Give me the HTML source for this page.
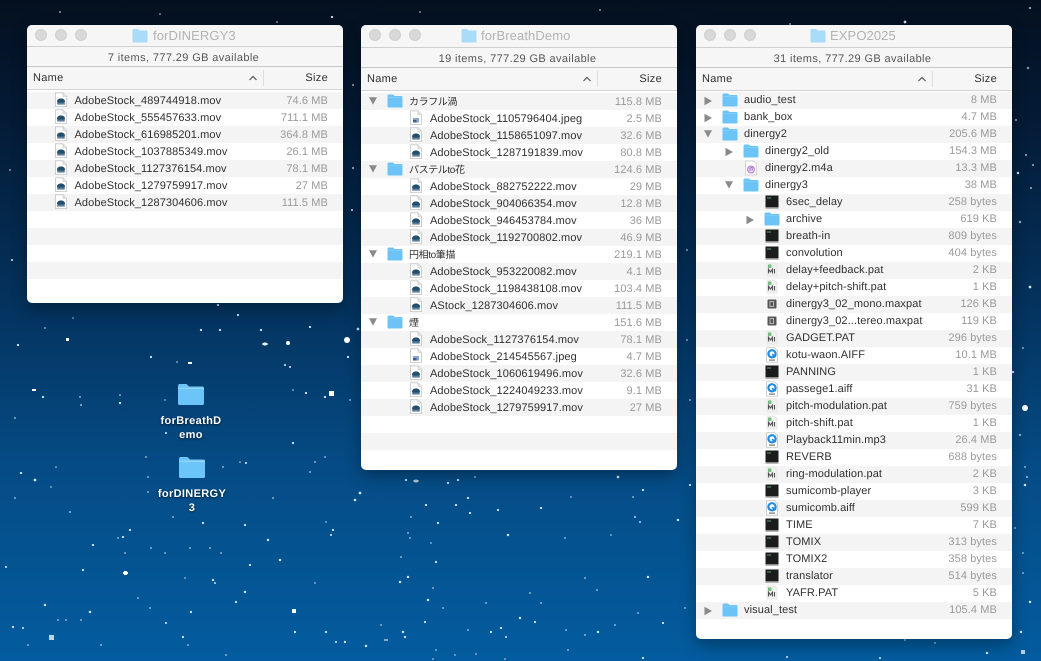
<!DOCTYPE html>
<html><head><meta charset="utf-8"><style>
html,body{margin:0;padding:0}
body{width:1041px;height:661px;overflow:hidden;position:relative;background:linear-gradient(#04101f 0,#041c38 130px,#04325d 300px,#054c86 470px,#035c9f 661px);font-family:"Liberation Sans","Noto Sans CJK JP",sans-serif;text-rendering:geometricPrecision}
#st{position:absolute;left:0;top:0;filter:blur(.35px)}
.w{position:absolute;top:25px;width:316px;background:#fff;border-radius:5px;overflow:hidden;box-shadow:0 6px 16px rgba(0,0,0,.33)}
.t{height:21px;background:#f6f6f6;border-bottom:1px solid #d0d0d0;position:relative}
.t u{position:absolute;top:4px;width:12px;height:12px;border-radius:50%;background:#d8d8d8;border:.5px solid #d0d0d0;box-sizing:border-box}
.t svg{position:absolute;top:3px}
.t span{position:absolute;top:3px;font-size:13px;line-height:16px;color:#b2b2b2;letter-spacing:.1px}
.f{height:19px;background:#f6f6f6;border-bottom:1px solid #c8c8c8;text-align:center;padding-right:3px;font-size:11px;line-height:22px;color:#555;letter-spacing:.38px}
.h{height:22px;background:#f6f6f6;border-bottom:1px solid #d4d4d4;position:relative;font-size:11px;line-height:22px;color:#2e2e2e;letter-spacing:.3px}
.h b{font-weight:normal;position:absolute;left:6px;top:0}
.h em{font-style:normal;position:absolute;right:15px;top:0}
.h s{position:absolute;left:236px;top:3px;width:1px;height:16px;background:#dedede}
.h svg{position:absolute;left:221px;top:8px}
.rows{margin-top:2px}
.r{height:17px;position:relative;font-size:11px;line-height:17px;color:#2f2f2f;letter-spacing:.1px;white-space:nowrap}
.r:nth-child(odd){background:#f4f4f4}
.up .r{line-height:19px}
.r svg{position:absolute;top:0}
.r svg.ic{width:16px;height:16px}
.r svg.tr{width:10px;height:10px;top:4px}
.r b{font-weight:normal;position:absolute;top:0}
.r i{font-style:normal;position:absolute;right:15px;top:0;color:#9a9a9a}
.d0 .ic{left:26px}.d1 .ic{left:47px}.d2 .ic{left:68px}
.d0 b{left:48px}.d1 b{left:69px}.d2 b{left:90px}
.d0 .tr{left:7px}.d1 .tr{left:28px}.d2 .tr{left:49px}
.j{font-size:10px;letter-spacing:-.4px}
.g{position:absolute;color:#fff;font-size:11px;font-weight:bold;line-height:14px;text-align:center;text-shadow:0 1px 2px rgba(0,0,0,.7);letter-spacing:.35px;width:90px}
</style></head><body>
<svg width="0" height="0" style="position:absolute"><defs>
<symbol id="fo" viewBox="0 0 16 16"><path d="M0.5 3.2Q.5 1.5 2 1.5H6L7.5 3H14.5Q15.5 3 15.5 4.2V13.6Q15.5 14.5 14.5 14.5H1.5Q.5 14.5 .5 13.6Z" fill="#6cc4f6"/><path d="M.5 4.5H15.5V5H.5Z" fill="#94d5fa"/></symbol>
<symbol id="mo" viewBox="0 0 16 16"><path d="M2.5 .8H10L13.5 4.3V14.6H2.5Z" fill="#fff" stroke="#c4c4c4" stroke-width=".8"/><path d="M10 .8V4.3H13.5" fill="#e6e6e6" stroke="#c4c4c4" stroke-width=".7"/><ellipse cx="8" cy="9.3" rx="4" ry="2.9" fill="#23506f"/><rect x="4.2" y="10.6" width="7.6" height="2" fill="#5d7f9c"/></symbol>
<symbol id="jp" viewBox="0 0 16 16"><path d="M2.5 .8H10L13.5 4.3V14.6H2.5Z" fill="#fff" stroke="#c4c4c4" stroke-width=".8"/><path d="M10 .8V4.3H13.5" fill="#e6e6e6" stroke="#c4c4c4" stroke-width=".7"/><rect x="5" y="8" width="6" height="4.5" fill="#8aa5cc"/><rect x="5" y="10" width="3.5" height="2.5" fill="#3f5f96"/></symbol>
<symbol id="te" viewBox="0 0 16 16"><rect x="1.5" y="1.5" width="13" height="12" fill="#1b1d1c"/><rect x="1.5" y="13" width="13" height="1.6" fill="#8a8a8a"/><rect x="3" y="3.5" width="4" height="1" fill="#5f9a68"/></symbol>
<symbol id="pa" viewBox="0 0 16 16"><path d="M3 1H10.5L13 3.5V14H3Z" fill="#f1f1f1" stroke="#e2e2e2" stroke-width=".7"/><rect x="4" y="2.5" width="3.4" height="3.4" fill="#6fbf7c"/><path d="M4.5 11.5V7.2L6.5 10L8.5 7.2V11.5M10.5 7V11.5" fill="none" stroke="#555" stroke-width="1.1"/></symbol>
<symbol id="mx" viewBox="0 0 16 16"><rect x="3.5" y="3.5" width="9" height="9" rx="1" fill="#565656"/><path d="M6 5.5H9.5V10.5H6Z" fill="none" stroke="#b8b8b8" stroke-width="1"/></symbol>
<symbol id="ai" viewBox="0 0 16 16"><path d="M2.5 .8H10.5L13.5 3.8V15.2H2.5Z" fill="#fff" stroke="#b8b8b8" stroke-width=".7"/><circle cx="8" cy="6.8" r="3.6" fill="none" stroke="#1e8ce6" stroke-width="2.2"/><path d="M8 7.3L12 9.8" stroke="#1e8ce6" stroke-width="1.6"/><rect x="5" y="12.5" width="6" height="1.2" fill="#777"/></symbol>
<symbol id="m4" viewBox="0 0 16 16"><path d="M2.5 1H10.5L13.5 4V15H2.5Z" fill="#fff" stroke="#c6c6c6" stroke-width=".7"/><circle cx="8" cy="9.5" r="3.5" fill="#e9d3ef" stroke="#b77fd0" stroke-width="1"/><path d="M7 11V8L9.2 7.5V10.5" fill="none" stroke="#8a5fc2" stroke-width=".8"/></symbol>
<symbol id="tr" viewBox="0 0 10 10"><path d="M1.5 .8L9 5L1.5 9.2Z" fill="#8a8a8a"/></symbol>
<symbol id="td" viewBox="0 0 10 10"><path d="M1 .3H9L5 7.6Z" fill="#8a8a8a"/></symbol>
<symbol id="bf" viewBox="0 0 26 21"><path d="M0 2Q0 0 2 0H8.5L11 2.5H24.5Q26 2.5 26 4.5V19.5Q26 21 24.5 21H1.5Q0 21 0 19.5Z" fill="#6cc5f8"/><path d="M0 3.8H26V5H0Z" fill="#93d6fb"/></symbol>
</defs></svg>

<svg id="st" width="1041" height="661" fill="#cfe6f8">
<g stroke="#cfe6f8" stroke-width=".7">
<circle cx="18" cy="345" r=".8"/><circle cx="45" cy="328" r=".6" opacity=".6"/><circle cx="73" cy="318" r=".6" opacity=".5"/><circle cx="238" cy="315" r=".8"/><circle cx="218" cy="305" r=".8"/><circle cx="201" cy="330" r=".8"/><circle cx="220" cy="330" r=".8"/><circle cx="261" cy="330" r=".8"/><circle cx="310" cy="327" r=".8"/><circle cx="358" cy="329" r="1"/><circle cx="348" cy="357" r=".8"/><circle cx="151" cy="357" r=".8"/><circle cx="177" cy="362" r=".6" opacity=".6"/><circle cx="285" cy="365" r=".7"/><circle cx="290" cy="367" r=".7"/><circle cx="43" cy="397" r=".8"/><circle cx="80" cy="397" r=".7" opacity=".6"/><circle cx="81" cy="405" r=".7" opacity=".7"/><circle cx="120" cy="395" r=".7" opacity=".6"/><circle cx="120" cy="403" r=".8"/><circle cx="165" cy="400" r=".7" opacity=".5"/><circle cx="306" cy="393" r=".8"/><circle cx="325" cy="397" r=".8"/><circle cx="293" cy="390" r=".6" opacity=".6"/><circle cx="15" cy="418" r=".7" opacity=".6"/><circle cx="166" cy="433" r=".7"/><circle cx="293" cy="443" r=".8"/><circle cx="146" cy="457" r=".7" opacity=".6"/><circle cx="325" cy="457" r=".7" opacity=".6"/><circle cx="246" cy="463" r=".7"/><circle cx="240" cy="462" r=".6" opacity=".6"/><circle cx="315" cy="462" r=".7" opacity=".6"/><circle cx="310" cy="472" r=".7" opacity=".6"/><circle cx="223" cy="467" r=".7" opacity=".6"/><circle cx="56" cy="467" r=".6" opacity=".6"/><circle cx="21" cy="473" r=".8"/><circle cx="35" cy="480" r="1"/><circle cx="51" cy="487" r=".6" opacity=".6"/><circle cx="148" cy="477" r=".7" opacity=".6"/><circle cx="148" cy="492" r=".7" opacity=".6"/><circle cx="15" cy="498" r=".7" opacity=".6"/><circle cx="273" cy="498" r=".7" opacity=".6"/><circle cx="355" cy="500" r=".8"/><circle cx="70" cy="512" r=".7" opacity=".7"/><circle cx="173" cy="517" r=".7" opacity=".6"/><circle cx="203" cy="523" r=".8"/><circle cx="245" cy="525" r=".8"/><circle cx="326" cy="522" r=".6" opacity=".6"/><circle cx="333" cy="530" r=".8"/><circle cx="331" cy="535" r=".7"/><circle cx="130" cy="530" r=".8"/><circle cx="123" cy="537" r=".8"/><circle cx="118" cy="538" r=".7" opacity=".6"/><circle cx="93" cy="545" r=".8"/><circle cx="268" cy="540" r=".9"/><circle cx="125" cy="553" r=".7" opacity=".6"/><circle cx="151" cy="548" r=".7" opacity=".6"/><circle cx="165" cy="553" r=".7" opacity=".6"/><circle cx="190" cy="548" r=".7" opacity=".6"/><circle cx="210" cy="548" r=".7" opacity=".6"/><circle cx="221" cy="553" r=".7" opacity=".6"/><circle cx="6" cy="567" r=".7"/><circle cx="250" cy="565" r=".8"/><circle cx="280" cy="560" r=".9"/><circle cx="83" cy="570" r=".8"/><circle cx="213" cy="580" r=".8"/><circle cx="215" cy="583" r=".6"/><circle cx="185" cy="578" r=".6" opacity=".6"/><circle cx="245" cy="592" r=".9"/><circle cx="315" cy="583" r=".6" opacity=".6"/><circle cx="236" cy="602" r=".8"/><circle cx="138" cy="598" r=".7" opacity=".6"/><circle cx="45" cy="605" r=".9"/><circle cx="90" cy="612" r=".9"/><circle cx="191" cy="612" r=".8"/><circle cx="150" cy="608" r=".7" opacity=".6"/><circle cx="58" cy="620" r=".7" opacity=".6"/><circle cx="66" cy="620" r=".7" opacity=".6"/><circle cx="81" cy="620" r=".7" opacity=".6"/><circle cx="166" cy="623" r=".7"/><circle cx="13" cy="627" r=".8"/><circle cx="23" cy="628" r=".7"/><circle cx="295" cy="632" r=".8"/><circle cx="326" cy="632" r=".8"/><circle cx="183" cy="637" r=".8"/><circle cx="336" cy="642" r=".7"/><circle cx="345" cy="642" r=".8"/><circle cx="28" cy="645" r=".7" opacity=".6"/><circle cx="101" cy="645" r=".7" opacity=".6"/><circle cx="188" cy="645" r=".7" opacity=".6"/><circle cx="226" cy="655" r=".7" opacity=".6"/>
<circle cx="406" cy="480" r=".8"/><circle cx="448" cy="483" r=".8"/><circle cx="458" cy="480" r=".8"/><circle cx="475" cy="477" r=".7" opacity=".6"/><circle cx="618" cy="477" r="1"/><circle cx="360" cy="493" r="1"/><circle cx="355" cy="500" r=".9"/><circle cx="643" cy="490" r=".8"/><circle cx="690" cy="485" r=".8"/><circle cx="468" cy="498" r=".8"/><circle cx="426" cy="505" r=".8"/><circle cx="456" cy="505" r=".8"/><circle cx="470" cy="513" r=".8"/><circle cx="498" cy="510" r=".8"/><circle cx="541" cy="508" r=".8"/><circle cx="571" cy="497" r=".6" opacity=".6"/><circle cx="633" cy="497" r=".7" opacity=".6"/><circle cx="635" cy="517" r=".8" opacity=".7"/><circle cx="640" cy="522" r=".8" opacity=".7"/><circle cx="678" cy="520" r=".9"/><circle cx="411" cy="517" r=".7" opacity=".6"/><circle cx="438" cy="523" r=".8"/><circle cx="408" cy="533" r=".7" opacity=".6"/><circle cx="410" cy="538" r=".7" opacity=".6"/><circle cx="431" cy="543" r=".6" opacity=".6"/><circle cx="508" cy="535" r=".9"/><circle cx="565" cy="538" r=".7" opacity=".6"/><circle cx="611" cy="535" r=".6" opacity=".6"/><circle cx="401" cy="557" r=".7" opacity=".6"/><circle cx="436" cy="562" r=".8"/><circle cx="408" cy="577" r=".9"/><circle cx="400" cy="582" r=".9"/><circle cx="648" cy="577" r=".9"/><circle cx="585" cy="578" r=".7" opacity=".6"/><circle cx="597" cy="590" r=".7" opacity=".6"/><circle cx="433" cy="588" r=".7" opacity=".6"/><circle cx="428" cy="600" r=".9"/><circle cx="530" cy="593" r=".7" opacity=".6"/><circle cx="486" cy="603" r=".7" opacity=".6"/><circle cx="541" cy="603" r=".7" opacity=".6"/><circle cx="443" cy="608" r=".7" opacity=".6"/><circle cx="638" cy="613" r=".7" opacity=".6"/><circle cx="685" cy="608" r=".7" opacity=".6"/><circle cx="425" cy="622" r=".8"/><circle cx="520" cy="618" r=".9"/><circle cx="535" cy="622" r=".8"/><circle cx="663" cy="623" r=".8"/><circle cx="381" cy="625" r=".7" opacity=".6"/><circle cx="615" cy="625" r=".7" opacity=".6"/><circle cx="403" cy="632" r=".9"/><circle cx="405" cy="637" r=".8"/><circle cx="468" cy="630" r=".7" opacity=".6"/><circle cx="491" cy="632" r=".8"/><circle cx="501" cy="628" r=".8"/><circle cx="506" cy="637" r=".7"/><circle cx="566" cy="630" r=".7" opacity=".6"/><circle cx="585" cy="635" r=".7" opacity=".6"/><circle cx="598" cy="632" r=".9"/><circle cx="345" cy="642" r=".8"/><circle cx="366" cy="646" r=".9"/><circle cx="436" cy="650" r=".6" opacity=".6"/><circle cx="455" cy="655" r=".6" opacity=".6"/><circle cx="476" cy="654" r=".6" opacity=".6"/><circle cx="568" cy="650" r=".7" opacity=".6"/><circle cx="643" cy="658" r=".8"/><circle cx="505" cy="659" r=".6" opacity=".6"/><circle cx="433" cy="659" r=".6" opacity=".6"/>
<circle cx="787" cy="657" r=".7"/><circle cx="987" cy="653" r=".9"/><circle cx="880" cy="658" r=".7"/><circle cx="935" cy="643" r=".7" opacity=".6"/><circle cx="905" cy="640" r=".7" opacity=".6"/><circle cx="1028" cy="68" r=".9" opacity=".6"/><circle cx="1016" cy="120" r=".8" opacity=".6"/><circle cx="1026" cy="155" r=".8" opacity=".6"/><circle cx="1033" cy="165" r=".8" opacity=".6"/><circle cx="1018" cy="173" r=".9"/><circle cx="1031" cy="188" r=".8" opacity=".6"/><circle cx="1020" cy="222" r=".9" opacity=".7"/><circle cx="1030" cy="287" r="1"/><circle cx="1023" cy="348" r=".7" opacity=".6"/><circle cx="1013" cy="372" r=".9"/><circle cx="1020" cy="435" r=".8" opacity=".7"/><circle cx="1025" cy="467" r=".7" opacity=".6"/><circle cx="1027" cy="477" r=".8" opacity=".6"/><circle cx="1025" cy="485" r=".9"/><circle cx="1015" cy="528" r=".7" opacity=".6"/><circle cx="1023" cy="553" r=".7" opacity=".6"/><circle cx="1023" cy="573" r=".7" opacity=".6"/><circle cx="1030" cy="602" r=".9"/><circle cx="1021" cy="632" r=".9"/>
<circle cx="332" cy="17" r=".8"/><circle cx="277" cy="22" r=".6" opacity=".6"/><circle cx="905" cy="22" r="1"/><circle cx="790" cy="24" r=".7" opacity=".6"/><circle cx="353" cy="85" r=".8" opacity=".6"/><circle cx="353" cy="168" r=".8" opacity=".7"/><circle cx="352" cy="210" r=".7"/><circle cx="10" cy="170" r=".7" opacity=".6"/><circle cx="12" cy="260" r=".7"/><circle cx="687" cy="250" r=".7" opacity=".6"/><circle cx="687" cy="340" r=".7" opacity=".6"/><circle cx="690" cy="400" r=".7" opacity=".6"/><circle cx="350" cy="400" r=".7" opacity=".6"/><circle cx="1030" cy="8" r=".8" opacity=".7"/><circle cx="600" cy="10" r=".7" opacity=".6"/><circle cx="420" cy="12" r=".6" opacity=".6"/><circle cx="160" cy="14" r=".6" opacity=".6"/><circle cx="60" cy="12" r=".7" opacity=".6"/>
</g>
<g fill="#fff"><rect x="66" y="338" width="3" height="3"/><ellipse cx="265" cy="344" rx="2.8" ry="1.5"/><circle cx="288" cy="343" r="2"/><circle cx="347" cy="340" r="3"/><rect x="188" y="362" width="4" height="2"/><rect x="32" y="389" width="4" height="2"/><rect x="329" y="391" width="5" height="5"/><rect x="124" y="571" width="3" height="4"/><rect x="123" y="572" width="5" height="2"/><rect x="292" y="609" width="4" height="4"/><rect x="49" y="635" width="5" height="5" opacity=".75"/><ellipse cx="416" cy="481" rx="2.8" ry="1.5" opacity=".7"/><rect x="384" y="639" width="4" height="2" opacity=".5"/><circle cx="1025" cy="408" r="3"/><rect x="1021" y="650" width="4" height="4" opacity=".7"/></g>
</svg>

<svg style="position:absolute;left:178px;top:384px" width="26" height="21"><use href="#bf"/></svg>
<div class="g" style="left:146px;top:414px">forBreathD<br>emo</div>
<svg style="position:absolute;left:179px;top:457px" width="26" height="21"><use href="#bf"/></svg>
<div class="g" style="left:147px;top:487px">forDINERGY<br>3</div>

<div class="w up" style="left:27px;height:278px">
<div class="t"><u style="left:8px"></u><u style="left:28px"></u><u style="left:48px"></u><svg style="left:105px" width="16" height="16"><path d="M.5 2.5Q.5 1 2 1H6L7.5 2.5H14.5Q15.5 2.5 15.5 3.5V13.5Q15.5 14.5 14.5 14.5H1.5Q.5 14.5 .5 13.5Z" fill="#a9dcf9"/></svg><span style="left:126px">forDINERGY3</span></div>
<div class="f">7 items, 777.29 GB available</div>
<div class="h"><b>Name</b><svg width="10" height="6"><path d="M1.5 5L5 1.5L8.5 5" fill="none" stroke="#555" stroke-width="1.2"/></svg><s></s><em>Size</em></div>
<div class="rows">
<div class="r d0"><svg class="ic"><use href="#mo"/></svg><b style="left:47.5px">AdobeStock_489744918.mov</b><i>74.6 MB</i></div>
<div class="r d0"><svg class="ic"><use href="#mo"/></svg><b style="left:47.5px">AdobeStock_555457633.mov</b><i>711.1 MB</i></div>
<div class="r d0"><svg class="ic"><use href="#mo"/></svg><b style="left:47.5px">AdobeStock_616985201.mov</b><i>364.8 MB</i></div>
<div class="r d0"><svg class="ic"><use href="#mo"/></svg><b style="left:47.5px">AdobeStock_1037885349.mov</b><i>26.1 MB</i></div>
<div class="r d0"><svg class="ic"><use href="#mo"/></svg><b style="left:47.5px">AdobeStock_1127376154.mov</b><i>78.1 MB</i></div>
<div class="r d0"><svg class="ic"><use href="#mo"/></svg><b style="left:47.5px">AdobeStock_1279759917.mov</b><i>27 MB</i></div>
<div class="r d0"><svg class="ic"><use href="#mo"/></svg><b style="left:47.5px">AdobeStock_1287304606.mov</b><i>111.5 MB</i></div>
<div class="r"></div><div class="r"></div><div class="r"></div><div class="r"></div><div class="r"></div>
</div></div>

<div class="w up" style="left:361px;height:445px">
<div class="t" style="height:22px"><u style="left:8px"></u><u style="left:28px"></u><u style="left:48px"></u><svg style="left:100px" width="16" height="16"><path d="M.5 2.5Q.5 1 2 1H6L7.5 2.5H14.5Q15.5 2.5 15.5 3.5V13.5Q15.5 14.5 14.5 14.5H1.5Q.5 14.5 .5 13.5Z" fill="#a9dcf9"/></svg><span style="left:120px">forBreathDemo</span></div>
<div class="f">19 items, 777.29 GB available</div>
<div class="h"><b>Name</b><svg width="10" height="6"><path d="M1.5 5L5 1.5L8.5 5" fill="none" stroke="#555" stroke-width="1.2"/></svg><s></s><em>Size</em></div>
<div class="rows">
<div class="r d0"><svg class="tr"><use href="#td"/></svg><svg class="ic"><use href="#fo"/></svg><b class="j">カラフル渦</b><i>115.8 MB</i></div>
<div class="r d1"><svg class="ic"><use href="#jp"/></svg><b>AdobeStock_1105796404.jpeg</b><i>2.5 MB</i></div>
<div class="r d1"><svg class="ic"><use href="#mo"/></svg><b>AdobeStock_1158651097.mov</b><i>32.6 MB</i></div>
<div class="r d1"><svg class="ic"><use href="#mo"/></svg><b>AdobeStock_1287191839.mov</b><i>80.8 MB</i></div>
<div class="r d0"><svg class="tr"><use href="#td"/></svg><svg class="ic"><use href="#fo"/></svg><b class="j">パステルto花</b><i>124.6 MB</i></div>
<div class="r d1"><svg class="ic"><use href="#mo"/></svg><b>AdobeStock_882752222.mov</b><i>29 MB</i></div>
<div class="r d1"><svg class="ic"><use href="#mo"/></svg><b>AdobeStock_904066354.mov</b><i>12.8 MB</i></div>
<div class="r d1"><svg class="ic"><use href="#mo"/></svg><b>AdobeStock_946453784.mov</b><i>36 MB</i></div>
<div class="r d1"><svg class="ic"><use href="#mo"/></svg><b>AdobeStock_1192700802.mov</b><i>46.9 MB</i></div>
<div class="r d0"><svg class="tr"><use href="#td"/></svg><svg class="ic"><use href="#fo"/></svg><b class="j">円相to筆描</b><i>219.1 MB</i></div>
<div class="r d1"><svg class="ic"><use href="#mo"/></svg><b>AdobeStock_953220082.mov</b><i>4.1 MB</i></div>
<div class="r d1"><svg class="ic"><use href="#mo"/></svg><b>AdobeStock_1198438108.mov</b><i>103.4 MB</i></div>
<div class="r d1"><svg class="ic"><use href="#mo"/></svg><b>AStock_1287304606.mov</b><i>111.5 MB</i></div>
<div class="r d0"><svg class="tr"><use href="#td"/></svg><svg class="ic"><use href="#fo"/></svg><b class="j">煙</b><i>151.6 MB</i></div>
<div class="r d1"><svg class="ic"><use href="#mo"/></svg><b>AdobeSock_1127376154.mov</b><i>78.1 MB</i></div>
<div class="r d1"><svg class="ic"><use href="#jp"/></svg><b>AdobeStock_214545567.jpeg</b><i>4.7 MB</i></div>
<div class="r d1"><svg class="ic"><use href="#mo"/></svg><b>AdobeStock_1060619496.mov</b><i>32.6 MB</i></div>
<div class="r d1"><svg class="ic"><use href="#mo"/></svg><b>AdobeStock_1224049233.mov</b><i>9.1 MB</i></div>
<div class="r d1"><svg class="ic"><use href="#mo"/></svg><b>AdobeStock_1279759917.mov</b><i>27 MB</i></div>
<div class="r"></div><div class="r"></div><div class="r"></div>
</div></div>

<div class="w" style="left:696px;height:614px">
<div class="t" style="height:22px"><u style="left:8px"></u><u style="left:28px"></u><u style="left:48px"></u><svg style="left:114px" width="16" height="16"><path d="M.5 2.5Q.5 1 2 1H6L7.5 2.5H14.5Q15.5 2.5 15.5 3.5V13.5Q15.5 14.5 14.5 14.5H1.5Q.5 14.5 .5 13.5Z" fill="#a9dcf9"/></svg><span style="left:134px">EXPO2025</span></div>
<div class="f">31 items, 777.29 GB available</div>
<div class="h"><b>Name</b><svg width="10" height="6"><path d="M1.5 5L5 1.5L8.5 5" fill="none" stroke="#555" stroke-width="1.2"/></svg><s></s><em>Size</em></div>
<div class="rows" style="margin-top:1px">
<div class="r d0"><svg class="tr"><use href="#tr"/></svg><svg class="ic"><use href="#fo"/></svg><b>audio_test</b><i>8 MB</i></div>
<div class="r d0"><svg class="tr"><use href="#tr"/></svg><svg class="ic"><use href="#fo"/></svg><b>bank_box</b><i>4.7 MB</i></div>
<div class="r d0"><svg class="tr"><use href="#td"/></svg><svg class="ic"><use href="#fo"/></svg><b>dinergy2</b><i>205.6 MB</i></div>
<div class="r d1"><svg class="tr"><use href="#tr"/></svg><svg class="ic"><use href="#fo"/></svg><b>dinergy2_old</b><i>154.3 MB</i></div>
<div class="r d1"><svg class="ic"><use href="#m4"/></svg><b>dinergy2.m4a</b><i>13.3 MB</i></div>
<div class="r d1"><svg class="tr"><use href="#td"/></svg><svg class="ic"><use href="#fo"/></svg><b>dinergy3</b><i>38 MB</i></div>
<div class="r d2"><svg class="ic"><use href="#te"/></svg><b>6sec_delay</b><i>258 bytes</i></div>
<div class="r d2"><svg class="tr"><use href="#tr"/></svg><svg class="ic"><use href="#fo"/></svg><b>archive</b><i>619 KB</i></div>
<div class="r d2"><svg class="ic"><use href="#te"/></svg><b>breath-in</b><i>809 bytes</i></div>
<div class="r d2"><svg class="ic"><use href="#te"/></svg><b>convolution</b><i>404 bytes</i></div>
<div class="r d2"><svg class="ic"><use href="#pa"/></svg><b>delay+feedback.pat</b><i>2 KB</i></div>
<div class="r d2"><svg class="ic"><use href="#pa"/></svg><b>delay+pitch-shift.pat</b><i>1 KB</i></div>
<div class="r d2"><svg class="ic"><use href="#mx"/></svg><b>dinergy3_02_mono.maxpat</b><i>126 KB</i></div>
<div class="r d2"><svg class="ic"><use href="#mx"/></svg><b>dinergy3_02...tereo.maxpat</b><i>119 KB</i></div>
<div class="r d2"><svg class="ic"><use href="#pa"/></svg><b>GADGET.PAT</b><i>296 bytes</i></div>
<div class="r d2"><svg class="ic"><use href="#ai"/></svg><b>kotu-waon.AIFF</b><i>10.1 MB</i></div>
<div class="r d2"><svg class="ic"><use href="#te"/></svg><b>PANNING</b><i>1 KB</i></div>
<div class="r d2"><svg class="ic"><use href="#ai"/></svg><b>passege1.aiff</b><i>31 KB</i></div>
<div class="r d2"><svg class="ic"><use href="#pa"/></svg><b>pitch-modulation.pat</b><i>759 bytes</i></div>
<div class="r d2"><svg class="ic"><use href="#pa"/></svg><b>pitch-shift.pat</b><i>1 KB</i></div>
<div class="r d2"><svg class="ic"><use href="#ai"/></svg><b>Playback11min.mp3</b><i>26.4 MB</i></div>
<div class="r d2"><svg class="ic"><use href="#te"/></svg><b>REVERB</b><i>688 bytes</i></div>
<div class="r d2"><svg class="ic"><use href="#pa"/></svg><b>ring-modulation.pat</b><i>2 KB</i></div>
<div class="r d2"><svg class="ic"><use href="#te"/></svg><b>sumicomb-player</b><i>3 KB</i></div>
<div class="r d2"><svg class="ic"><use href="#ai"/></svg><b>sumicomb.aiff</b><i>599 KB</i></div>
<div class="r d2"><svg class="ic"><use href="#te"/></svg><b>TIME</b><i>7 KB</i></div>
<div class="r d2"><svg class="ic"><use href="#te"/></svg><b>TOMIX</b><i>313 bytes</i></div>
<div class="r d2"><svg class="ic"><use href="#te"/></svg><b>TOMIX2</b><i>358 bytes</i></div>
<div class="r d2"><svg class="ic"><use href="#te"/></svg><b>translator</b><i>514 bytes</i></div>
<div class="r d2"><svg class="ic"><use href="#pa"/></svg><b>YAFR.PAT</b><i>5 KB</i></div>
<div class="r d0"><svg class="tr"><use href="#tr"/></svg><svg class="ic"><use href="#fo"/></svg><b>visual_test</b><i>105.4 MB</i></div>
<div class="r"></div>
</div></div>
</body></html>
